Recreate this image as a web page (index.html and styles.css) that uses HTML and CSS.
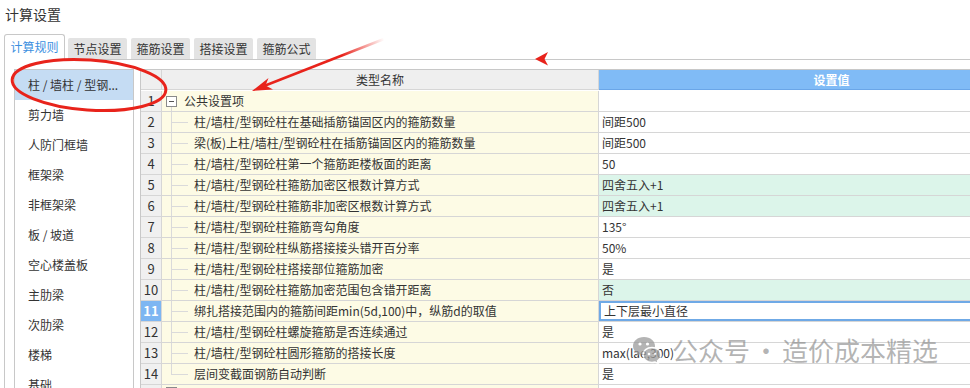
FILE: index.html
```html
<!DOCTYPE html>
<html lang="zh-CN">
<head>
    <meta charset="UTF-8">
    <title>计算设置</title>
    <link rel="stylesheet" href="styles.css">
</head>
<body>
    <div class="title">计算设置</div>

    <div class="tabs">
        <div class="tab active">计算规则</div>
        <div class="tab">节点设置</div>
        <div class="tab">箍筋设置</div>
        <div class="tab">搭接设置</div>
        <div class="tab">箍筋公式</div>
    </div>

    <div class="panel">
        <ul class="side-list">
            <li class="selected">柱 / 墙柱 / 型钢...</li>
            <li>剪力墙</li>
            <li>人防门框墙</li>
            <li>框架梁</li>
            <li>非框架梁</li>
            <li>板 / 坡道</li>
            <li>空心楼盖板</li>
            <li>主肋梁</li>
            <li>次肋梁</li>
            <li>楼梯</li>
            <li>基础</li>
        </ul>

        <div class="grid">
            <div class="row head">
                <div class="num"></div>
                <div class="name">类型名称</div>
                <div class="val">设置值</div>
            </div>
            <div class="row">
                <div class="num">1</div>
                <div class="name group"><span class="toggle"></span>公共设置项</div>
                <div class="val"></div>
            </div>
            <div class="row">
                <div class="num">2</div>
                <div class="name"><span class="branch"></span>柱/墙柱/型钢砼柱在基础插筋锚固区内的箍筋数量</div>
                <div class="val">间距500</div>
            </div>
            <div class="row">
                <div class="num">3</div>
                <div class="name"><span class="branch"></span>梁(板)上柱/墙柱/型钢砼柱在插筋锚固区内的箍筋数量</div>
                <div class="val">间距500</div>
            </div>
            <div class="row">
                <div class="num">4</div>
                <div class="name"><span class="branch"></span>柱/墙柱/型钢砼柱第一个箍筋距楼板面的距离</div>
                <div class="val">50</div>
            </div>
            <div class="row">
                <div class="num">5</div>
                <div class="name"><span class="branch"></span>柱/墙柱/型钢砼柱箍筋加密区根数计算方式</div>
                <div class="val alt">四舍五入+1</div>
            </div>
            <div class="row">
                <div class="num">6</div>
                <div class="name"><span class="branch"></span>柱/墙柱/型钢砼柱箍筋非加密区根数计算方式</div>
                <div class="val alt">四舍五入+1</div>
            </div>
            <div class="row">
                <div class="num">7</div>
                <div class="name"><span class="branch"></span>柱/墙柱/型钢砼柱箍筋弯勾角度</div>
                <div class="val">135°</div>
            </div>
            <div class="row">
                <div class="num">8</div>
                <div class="name"><span class="branch"></span>柱/墙柱/型钢砼柱纵筋搭接接头错开百分率</div>
                <div class="val">50%</div>
            </div>
            <div class="row">
                <div class="num">9</div>
                <div class="name"><span class="branch"></span>柱/墙柱/型钢砼柱搭接部位箍筋加密</div>
                <div class="val">是</div>
            </div>
            <div class="row">
                <div class="num">10</div>
                <div class="name"><span class="branch"></span>柱/墙柱/型钢砼柱箍筋加密范围包含错开距离</div>
                <div class="val alt">否</div>
            </div>
            <div class="row current">
                <div class="num">11</div>
                <div class="name"><span class="branch"></span>绑扎搭接范围内的箍筋间距min(5d,100)中，纵筋d的取值</div>
                <div class="val editing">上下层最小直径</div>
            </div>
            <div class="row">
                <div class="num">12</div>
                <div class="name"><span class="branch"></span>柱/墙柱/型钢砼柱螺旋箍筋是否连续通过</div>
                <div class="val">是</div>
            </div>
            <div class="row">
                <div class="num">13</div>
                <div class="name"><span class="branch"></span>柱/墙柱/型钢砼柱圆形箍筋的搭接长度</div>
                <div class="val">max(lae,300)</div>
            </div>
            <div class="row">
                <div class="num">14</div>
                <div class="name"><span class="branch last"></span>层间变截面钢筋自动判断</div>
                <div class="val">是</div>
            </div>
            <div class="row">
                <div class="num"></div>
                <div class="name group"><span class="toggle near"></span></div>
                <div class="val"></div>
            </div>
        </div>
    </div>

    <!-- 水印 -->
    <div class="watermark">
        <svg class="wechat" width="30" height="30" viewBox="0 0 30 30">
            <path d="M12 2 C5.5 2 1 6 1 11 C1 14 2.6 16.4 5 18 L4.2 21 L7.8 19.3 C9.1 19.7 10.5 20 12 20 C18.5 20 23 16 23 11 C23 6 18.5 2 12 2 Z" fill="#9b9b9b"/>
            <circle cx="8" cy="9" r="1.6" fill="#fff"/>
            <circle cx="15.5" cy="9" r="1.6" fill="#fff"/>
            <path d="M20 12.5 C14.8 12.5 11 15.8 11 20 C11 24.2 14.8 27.5 20 27.5 C21.1 27.5 22.1 27.3 23.1 27 L26.3 28.6 L25.6 25.9 C27.7 24.5 29 22.4 29 20 C29 15.8 25.2 12.5 20 12.5 Z" fill="#9b9b9b" stroke="#fff" stroke-width="1.5"/>
            <circle cx="17" cy="19" r="1.3" fill="#fff"/>
            <circle cx="23" cy="19" r="1.3" fill="#fff"/>
        </svg>
        <span>公众号<span class="dot">・</span>造价成本精选</span>
    </div>

    <!-- 红色标注 -->
    <svg class="marks" width="970" height="388" viewBox="0 0 970 388">
        <defs>
            <linearGradient id="fade" x1="264" y1="86" x2="384" y2="39" gradientUnits="userSpaceOnUse">
                <stop offset="0" stop-color="#e8231b"/>
                <stop offset="0.65" stop-color="#e8231b"/>
                <stop offset="1" stop-color="#e8231b" stop-opacity="0"/>
            </linearGradient>
        </defs>
        <ellipse cx="89" cy="85" rx="77" ry="25" fill="none" stroke="#e8231b" stroke-width="3" transform="rotate(4 89 85)"/>
        <line x1="264" y1="86" x2="384" y2="39" stroke="url(#fade)" stroke-width="2.5"/>
        <path d="M252 91 L268.5 78 L265.5 85.5 L273 89.5 Z" fill="#e8231b"/>
        <path d="M535 59 L548 52 L544.5 59 L548 65.5 Z" fill="#e8231b"/>
    </svg>
</body>
</html>
```

FILE: styles.css
```css
* {
    margin: 0;
    padding: 0;
    box-sizing: border-box;
    font-family: "Microsoft YaHei", "Noto Sans CJK SC", sans-serif;
}

html, body {
    width: 970px;
    height: 388px;
    overflow: hidden;
    background: #fff;
    color: #333;
}

body {
    position: relative;
}

.title {
    height: 34px;
    padding: 4px 0 0 5px;
    font-size: 14px;
    line-height: 20px;
}

/* 顶部页签 */
.tabs {
    display: flex;
    align-items: flex-end;
    gap: 4px;
    height: 25px;
    padding-left: 4px;
}

.tab {
    width: 59px;
    height: 21px;
    background: #e3e3e3;
    border-radius: 2px 2px 0 0;
    font-size: 12px;
    line-height: 21px;
    text-align: center;
    color: #333;
}

.tab.active {
    position: relative; /* 盖住下方面板的上边框 */
    width: 61px;
    height: 26px;
    margin-right: -1px;
    margin-bottom: -1px;
    background: #fff;
    border: 1px solid #c8c8c8;
    border-bottom: none;
    border-radius: 3px 3px 0 0;
    color: #3c8fdf;
    line-height: 24px;
}

/* 主面板 */
.panel {
    display: flex;
    align-items: flex-start;
    margin-left: 4px;
    height: 329px;
    overflow: hidden;
    padding: 9px 0 0 9px;
    border-top: 1px solid #c8c8c8;
    border-left: 1px solid #c8c8c8;
}

.side-list {
    flex: none;
    width: 120px;
    height: 400px;
    list-style: none;
    border: 1px solid #c8c8c8;
}

.side-list li {
    height: 30px;
    padding-left: 13px;
    font-size: 12px;
    line-height: 30px;
    color: #333;
}

.side-list li.selected {
    background: #c5dcf3;
}

/* 表格 */
.grid {
    flex: none;
    width: 921px;
    margin-left: 6px;
    border-top: 1px solid #c8c8c8;
    border-left: 1px solid #c8c8c8;
}

.row {
    display: flex;
    height: 21px;
}

.row > div {
    height: 21px;
    border-bottom: 1px solid #d6d6d6;
    font-size: 12px;
    line-height: 20px;
    white-space: nowrap;
}

.row > .num {
    flex: none;
    width: 21px;
    background: #f0f0f0;
    border-right: 1px solid #d6d6d6;
    text-align: center;
    font-size: 13px;
}

.name {
    flex: none;
    display: flex;
    align-items: flex-start;
    width: 437px;
    padding-left: 9px;
    background: #fdfbe5;
    border-right: 1px solid #d6d6d6;
}

.val {
    flex: none;
    width: 462px;
    padding-left: 3px;
    background: #fff;
}

.val.alt {
    background: #dcf5ea;
}

.val.editing {
    padding-left: 5px;
    box-shadow: inset 0 0 0 2px #6fa9e6;
}

.row.current .num {
    background: #7db6f2;
    color: #fff;
    font-weight: bold;
}

.row.head > div {
    height: 20px;
    line-height: 19px;
}

.row.head .num,
.row.head .name {
    background: #efefef;
}

.row.head .name {
    display: block;
    padding-left: 0;
    text-align: center;
}

.row.head .val {
    background: #80bbf6;
    border-bottom-color: #6aa6e8;
    color: #fff;
    font-weight: bold;
    text-align: center;
}

/* 树形连接线 */
.name.group {
    padding-left: 4px;
    background: #fdfbe5 linear-gradient(#dadada, #dadada) no-repeat 9px 16px / 1px 5px;
}

.toggle {
    flex: none;
    width: 11px;
    height: 11px;
    margin: 5px 7px 0 0;
    border: 1px solid #8a8a8a;
    background: #fff linear-gradient(#555, #555) no-repeat center / 5px 1px;
}

.toggle.near {
    margin-top: 2px;
}

.branch {
    flex: none;
    width: 17px;
    height: 20px;
    margin-right: 6px;
    border-left: 1px solid #dadada;
    background: linear-gradient(#dadada, #dadada) no-repeat 0 10px / 100% 1px;
}

.branch.last {
    border-left: none;
    background:
        linear-gradient(#dadada, #dadada) no-repeat 0 10px / 100% 1px,
        linear-gradient(#dadada, #dadada) no-repeat 0 0 / 1px 10px;
}

/* 水印 */
.watermark {
    position: absolute;
    left: 632px;
    top: 334px;
    display: flex;
    align-items: center;
    gap: 10px;
    font-size: 26px;
    line-height: 32px;
    color: rgba(130, 130, 130, 0.6);
}

.watermark .dot {
    margin: 0 3px;
}

.wechat {
    opacity: 0.75;
}

.marks {
    position: absolute;
    left: 0;
    top: 0;
    pointer-events: none;
}
```
